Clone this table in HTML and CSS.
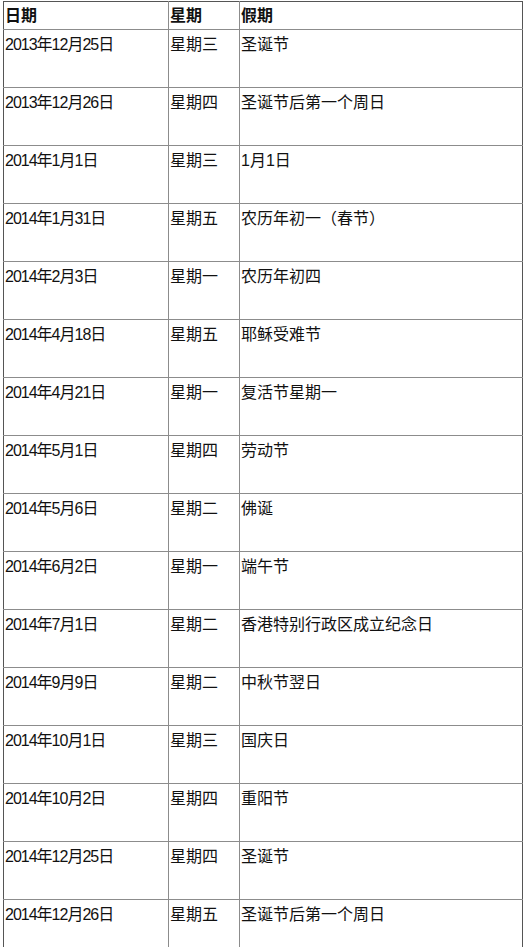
FILE: index.html
```html
<!DOCTYPE html>
<html lang="zh-CN">
<head>
<meta charset="utf-8">
<title>假期</title>
<link rel="stylesheet" href="styles.css">
</head>
<body>
<table class="holidays">
  <colgroup>
    <col class="c-date">
    <col class="c-week">
    <col class="c-name">
  </colgroup>
  <thead>
    <tr><th>日期</th><th>星期</th><th>假期</th></tr>
  </thead>
  <tbody>
    <tr><td>2013年12月25日</td><td>星期三</td><td>圣诞节</td></tr>
    <tr><td>2013年12月26日</td><td>星期四</td><td>圣诞节后第一个周日</td></tr>
    <tr><td>2014年1月1日</td><td>星期三</td><td>1月1日</td></tr>
    <tr><td>2014年1月31日</td><td>星期五</td><td>农历年初一（春节）</td></tr>
    <tr><td>2014年2月3日</td><td>星期一</td><td>农历年初四</td></tr>
    <tr><td>2014年4月18日</td><td>星期五</td><td>耶稣受难节</td></tr>
    <tr><td>2014年4月21日</td><td>星期一</td><td>复活节星期一</td></tr>
    <tr><td>2014年5月1日</td><td>星期四</td><td>劳动节</td></tr>
    <tr><td>2014年5月6日</td><td>星期二</td><td>佛诞</td></tr>
    <tr><td>2014年6月2日</td><td>星期一</td><td>端午节</td></tr>
    <tr><td>2014年7月1日</td><td>星期二</td><td>香港特别行政区成立纪念日</td></tr>
    <tr><td>2014年9月9日</td><td>星期二</td><td>中秋节翌日</td></tr>
    <tr><td>2014年10月1日</td><td>星期三</td><td>国庆日</td></tr>
    <tr><td>2014年10月2日</td><td>星期四</td><td>重阳节</td></tr>
    <tr><td>2014年12月25日</td><td>星期四</td><td>圣诞节</td></tr>
    <tr><td>2014年12月26日</td><td>星期五</td><td>圣诞节后第一个周日</td></tr>
  </tbody>
</table>
</body>
</html>
```

FILE: styles.css
```css
html, body {
  margin: 0;
  padding: 0;
  background: #ffffff;
}

body {
  padding: 1px 0 0 3px;
  font-family: "Liberation Sans", "Noto Sans CJK SC", sans-serif;
  font-size: 16px;
  color: #111111;
}

.holidays {
  border-collapse: collapse;
  width: 520px;
  table-layout: fixed;
  border: 1px solid #555555;
}

.c-date { width: 165px; }
.c-week { width: 71px; }
.c-name { width: auto; }

.holidays th,
.holidays td {
  border: 1px solid #8c8c8c;
  padding: 0 0 0 1px;
  text-align: left;
  white-space: nowrap;
  overflow: hidden;
}

.holidays th {
  height: 27px;
  font-weight: bold;
  vertical-align: middle;
  line-height: 20px;
}

.holidays td {
  height: 52px;
  vertical-align: top;
  line-height: 20px;
  padding-top: 5px;
}

.holidays td:first-child {
  letter-spacing: -1px;
}

.holidays thead th { border-top-color: #555555; }
.holidays th:first-child, .holidays td:first-child { border-left-color: #555555; }
.holidays th:last-child, .holidays td:last-child { border-right-color: #555555; }
```
